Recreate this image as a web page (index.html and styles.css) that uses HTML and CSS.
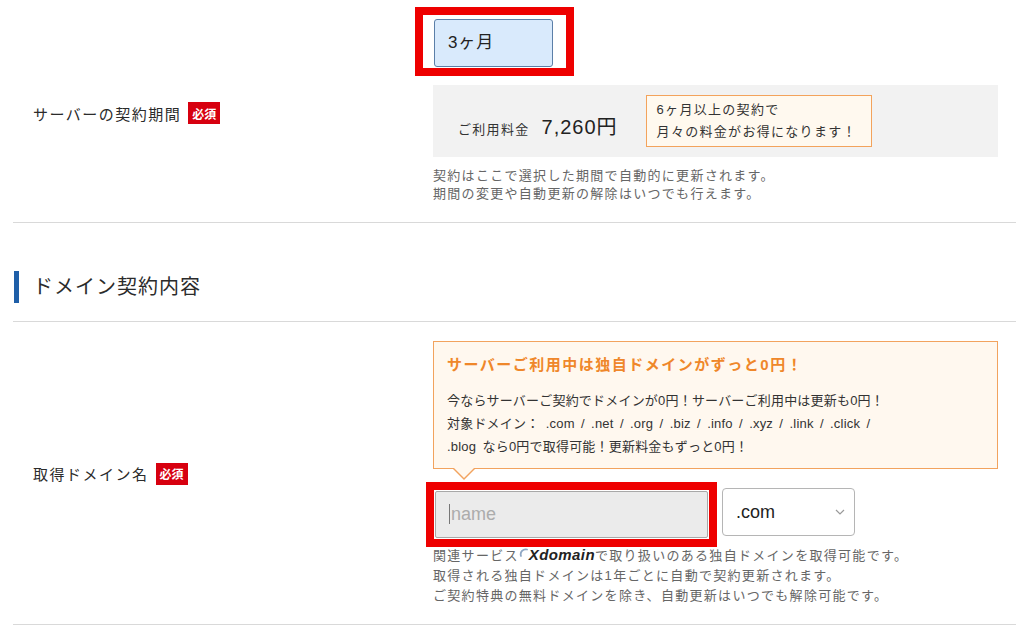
FILE: index.html
```html
<!DOCTYPE html>
<html lang="ja">
<head>
  <meta charset="UTF-8">
  <title>お申し込み内容</title>
  <link rel="stylesheet" href="styles.css">
</head>
<body>
  <div class="form">

    <!-- サーバーの契約期間 -->
    <div class="row row-period">
      <div class="label">サーバーの契約期間<span class="req">必須</span></div>
      <div class="field">
        <div class="mark">
          <div class="period-btn">3ヶ月</div>
        </div>
        <div class="price-box">
          <div class="price">ご利用料金<span class="amount">7,260円</span></div>
          <div class="tip">6ヶ月以上の契約で<br>月々の料金がお得になります！</div>
        </div>
        <p class="note">契約はここで選択した期間で自動的に更新されます。<br>期間の変更や自動更新の解除はいつでも行えます。</p>
      </div>
    </div>

    <!-- ドメイン -->
    <h2 class="section-title"><span>ドメイン契約内容</span></h2>

    <div class="row row-domain">
      <div class="label">取得ドメイン名<span class="req">必須</span></div>
      <div class="field">
        <div class="callout">
          <p class="callout-title">サーバーご利用中は独自ドメインがずっと<b>0</b>円！</p>
          <p class="callout-body">今ならサーバーご契約でドメインが0円！サーバーご利用中は更新も0円！<br>対象ドメイン： .com / .net / .org / .biz / .info / .xyz / .link / .click /<br>.blog なら0円で取得可能！更新料金もずっと0円！</p>
        </div>
        <div class="domain-input">
          <div class="mark mark-tight">
            <div class="name-input"><span class="caret"></span>name</div>
          </div>
          <div class="tld-select">
            .com
            <svg class="chevron" width="10" height="6" viewBox="0 0 10 6"><path d="M1 1l4 4 4-4" fill="none" stroke="#9a9a9a" stroke-width="1.2"/></svg>
          </div>
        </div>
        <p class="note note-domain">関連サービス<span class="xdomain"><svg width="9" height="14" viewBox="0 0 9 14"><path d="M8 2.5A5 5 0 0 0 2 9" fill="none" stroke="#8fa7c4" stroke-width="1.8" stroke-linecap="round"/></svg>Xdomain</span>で取り扱いのある独自ドメインを取得可能です。<br>取得される独自ドメインは1年ごとに自動で契約更新されます。<br>ご契約特典の無料ドメインを除き、自動更新はいつでも解除可能です。</p>
      </div>
    </div>

  </div>
</body>
</html>
```

FILE: styles.css
```css
body {
  margin: 0;
  background: #fff;
  color: #333;
  font-family: "Liberation Sans", "Noto Sans CJK JP", sans-serif;
}

p {
  margin: 0;
}

.form {
  padding: 0 8px 0 13px;
}

.row {
  display: grid;
  grid-template-columns: 420px 1fr;
  align-items: center;
  padding-right: 18px;
  border-bottom: 1px solid #d9d9d9;
}

.row-period {
  padding-top: 7px;
  padding-bottom: 19px;
}

.row-period .label {
  margin-top: 16px;
}

.row-domain {
  padding-top: 19px;
  padding-bottom: 18px;
}

.label {
  display: flex;
  align-items: center;
  padding-left: 20px;
  font-size: 15px;
  letter-spacing: 0.1em;
  color: #2b2b2b;
}

.req {
  display: inline-flex;
  align-items: center;
  justify-content: center;
  width: 32px;
  height: 22px;
  margin-left: 7px;
  background: #d7000f;
  color: #fff;
  font-size: 12px;
  font-weight: bold;
  letter-spacing: 0;
}

/* 赤枠（注目） */
.mark {
  display: inline-block;
  margin-left: -18px;
  padding: 4px 13px 1px 11px;
  border: 8px solid #ee0000;
}

.mark-tight {
  margin: -7px 0 -11px -7px;
  padding: 1px;
}

.period-btn {
  width: 104px;
  height: 46px;
  padding-left: 13px;
  border: 1px solid #5b7fa8;
  border-radius: 3px;
  background: #d9eafc;
  font-size: 17px;
  line-height: 46px;
  letter-spacing: 0.05em;
  color: #222;
}

.price-box {
  display: flex;
  align-items: flex-end;
  margin-top: 9px;
  padding: 10px 0 10px 25px;
  background: #f2f2f2;
}

.price {
  margin-bottom: 3px;
  font-size: 13px;
  line-height: 28px;
  letter-spacing: 0.1em;
}

.amount {
  margin-left: 12px;
  font-size: 20px;
  letter-spacing: 0.05em;
  color: #222;
}

.tip {
  margin-left: 28px;
  padding: 3px 14px 3px 10px;
  border: 1px solid #f3a35c;
  background: #fff9ef;
  font-size: 13px;
  line-height: 22px;
  letter-spacing: 0.1em;
}

.note {
  margin-top: 10px;
  font-size: 13px;
  line-height: 18px;
  letter-spacing: 0.1em;
  color: #666;
}

.note-domain {
  margin-top: 9px;
  line-height: 20px;
}

.section-title {
  margin: 48px 0 0;
  padding-bottom: 18px;
  border-bottom: 1px solid #d9d9d9;
  font-size: 20px;
  font-weight: normal;
  letter-spacing: 0.05em;
  color: #2b2b2b;
}

.section-title span {
  display: block;
  margin-left: 1px;
  padding-left: 14px;
  border-left: 5px solid #1f5fa8;
  line-height: 32px;
}

/* 吹き出し */
.callout {
  position: relative;
  padding: 11px 14px 10px 13px;
  border: 1px solid #f2a35e;
  background: #fff8ef;
}

.callout::before,
.callout::after {
  content: "";
  position: absolute;
  left: 18px;
  border-left: 12px solid transparent;
  border-right: 12px solid transparent;
}

.callout::before {
  bottom: -12px;
  border-top: 12px solid #f2a35e;
}

.callout::after {
  bottom: -10px;
  left: 19px;
  border-left-width: 11px;
  border-right-width: 11px;
  border-top: 11px solid #fff8ef;
}

.callout-title {
  font-size: 15px;
  font-weight: bold;
  line-height: 24px;
  letter-spacing: 0.1em;
  color: #ef872a;
}

.callout-body {
  margin-top: 12px;
  font-size: 13px;
  line-height: 23px;
  letter-spacing: 0.2px;
  word-spacing: 2.5px;
  color: #333;
}

.domain-input {
  display: flex;
  align-items: center;
  margin-top: 19px;
}

.name-input {
  display: flex;
  align-items: center;
  width: 258px;
  height: 45px;
  padding-left: 13px;
  border: 1px solid #a8a8a8;
  border-radius: 2px;
  background: #ebebeb;
  font-size: 18px;
  color: #acacac;
}

.caret {
  width: 1px;
  height: 20px;
  margin-right: 1px;
  background: #777;
}

.tld-select {
  position: relative;
  display: flex;
  align-items: center;
  width: 118px;
  height: 46px;
  margin-left: 5px;
  padding-left: 13px;
  border: 1px solid #b5b5b5;
  border-radius: 4px;
  background: #fff;
  font-size: 18px;
  color: #222;
}

.chevron {
  position: absolute;
  right: 9px;
  top: 20px;
}

.xdomain {
  font-weight: bold;
  font-style: italic;
  font-size: 15px;
  letter-spacing: 0.4px;
  color: #222;
}

.xdomain svg {
  vertical-align: -1px;
  margin-right: 1px;
}
```
